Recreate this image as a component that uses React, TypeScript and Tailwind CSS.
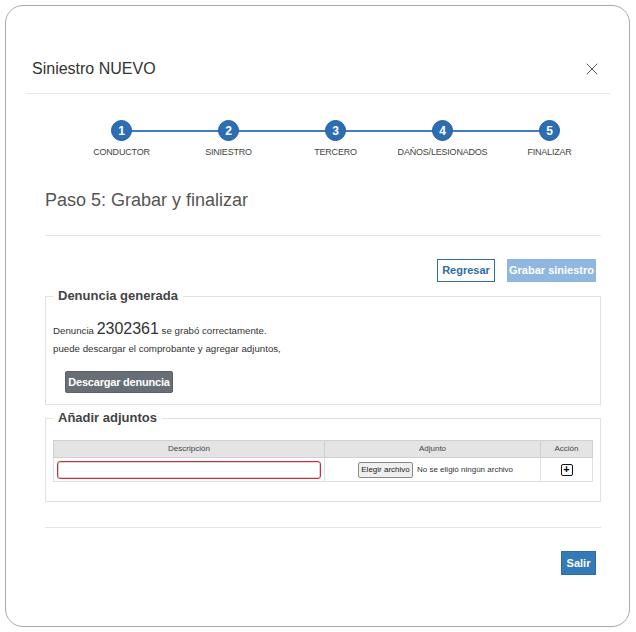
import React from "react";
import { X } from "lucide-react";

const steps = ["CONDUCTOR", "SINIESTRO", "TERCERO", "DAÑOS/LESIONADOS", "FINALIZAR"];

function Stepper() {
  return (
    <div className="relative ml-[62px] mt-[26px] grid w-[535px] grid-cols-5">
      <div className="absolute left-[53px] right-[53px] top-[10px] h-[2px] bg-[#3d7cc0]" />
      {steps.map((label, i) => (
        <div key={label} className="relative flex flex-col items-center">
          <div className="flex h-[21px] w-[21px] items-center justify-center rounded-full border border-[#1f5d9e] bg-[#2d6db3] text-[12px] font-bold leading-none text-white">
            {i + 1}
          </div>
          <div className="mt-[5px] text-[9px] leading-[12px] tracking-[-0.2px] text-[#444]">{label}</div>
        </div>
      ))}
    </div>
  );
}

function Fieldset({ title, children, className }: { title: string; children: React.ReactNode; className?: string }) {
  return (
    <fieldset className={"border border-[#e2e2e2] px-[7px] " + (className ?? "")}>
      <legend className="px-[5px] text-[13px] font-bold leading-[16px] text-[#444]">{title}</legend>
      {children}
    </fieldset>
  );
}

export default function App() {
  return (
    <div className="h-[632px] w-[636px] bg-white pl-[5px] pt-[5px] font-['Liberation_Sans',Arial,sans-serif]">
      <div className="h-[622px] w-[625px] rounded-[18px] border border-[#a9a9a9] bg-white">
        {/* header */}
        <div className="mx-[19px] flex items-center justify-between border-b border-[#e6e9ee] pb-[14px] pl-[7px] pr-[8px] pt-[53px]">
          <span className="text-[16px] leading-[20px] text-[#333]">Siniestro NUEVO</span>
          <X size={20} strokeWidth={1.2} className="text-[#555]" />
        </div>

        <Stepper />

        <div className="ml-[39px] mr-[28px]">
          <div className="mt-[30px] border-b border-[#e5e5e5] pb-[23px] text-[18px] leading-[24px] text-[#555]">
            Paso 5: Grabar y finalizar
          </div>

          <div className="mr-[5px] mt-[23px] flex justify-end gap-[12px]">
            <button className="h-[23px] w-[58px] border border-[#2e6da4] bg-white text-[11px] font-bold text-[#2e6da4]">
              Regresar
            </button>
            <button className="h-[23px] w-[89px] border border-[#8cb5df] bg-[#8fb7e0] text-[11px] font-bold text-white">
              Grabar siniestro
            </button>
          </div>

          <Fieldset title="Denuncia generada" className="mt-[6px] pb-[11px]">
            <div className="pt-[15px] text-[9.7px] leading-[20px] text-[#333]">
              Denuncia <span className="text-[16px]">2302361</span> se grabó correctamente.
            </div>
            <div className="mt-[1px] text-[9.7px] leading-[14px] text-[#333]">
              puede descargar el comprobante y agregar adjuntos,
            </div>
            <button className="ml-[12px] mt-[15px] h-[22px] w-[108px] whitespace-nowrap rounded-[2px] border border-[#5a6168] bg-[#676e76] text-[11px] font-bold tracking-[-0.2px] text-white">
              Descargar denuncia
            </button>
          </Fieldset>

          <Fieldset title="Añadir adjuntos" className="mt-[5px] pb-[19px]">
            <table className="mt-[14px] w-full border-collapse text-[8px] text-[#444]">
              <thead>
                <tr className="h-[17px] bg-[#e4e4e4]">
                  <th className="w-[271px] border border-[#d0d0d0] font-normal">Descripción</th>
                  <th className="w-[216px] border border-[#d0d0d0] font-normal">Adjunto</th>
                  <th className="border border-[#d0d0d0] font-normal">Acción</th>
                </tr>
              </thead>
              <tbody>
                <tr className="h-[24px]">
                  <td className="border border-[#e0e0e0] px-[3px]">
                    <div className="h-[18px] w-full rounded-[3px] border border-[#c9303f] bg-white shadow-[inset_0_0_0_1px_rgba(160,60,70,0.25)]" />
                  </td>
                  <td className="border border-[#e0e0e0]">
                    <div className="flex items-center pl-[33px]">
                      <span className="flex h-[16px] w-[55px] items-center justify-center rounded-[2px] border border-[#8a8a8a] bg-[#efefef] text-[8px] text-[#222]">
                        Elegir archivo
                      </span>
                      <span className="ml-[4px] text-[8px] text-[#333]">No se eligió ningún archivo</span>
                    </div>
                  </td>
                  <td className="border border-[#e0e0e0]">
                    <div className="flex justify-center">
                      <div className="flex h-[12px] w-[12px] items-center justify-center rounded-[2px] border border-[#111] text-[11px] font-bold leading-none text-black">
                        +
                      </div>
                    </div>
                  </td>
                </tr>
              </tbody>
            </table>
          </Fieldset>

          <div className="mt-[25px] border-t border-[#e3e3e3]" />
          <div className="mr-[5px] mt-[23px] flex justify-end">
            <button className="h-[24px] w-[35px] border border-[#2e6da4] bg-[#337ab7] text-[11px] font-bold text-white">
              Salir
            </button>
          </div>
        </div>
      </div>
    </div>
  );
}
